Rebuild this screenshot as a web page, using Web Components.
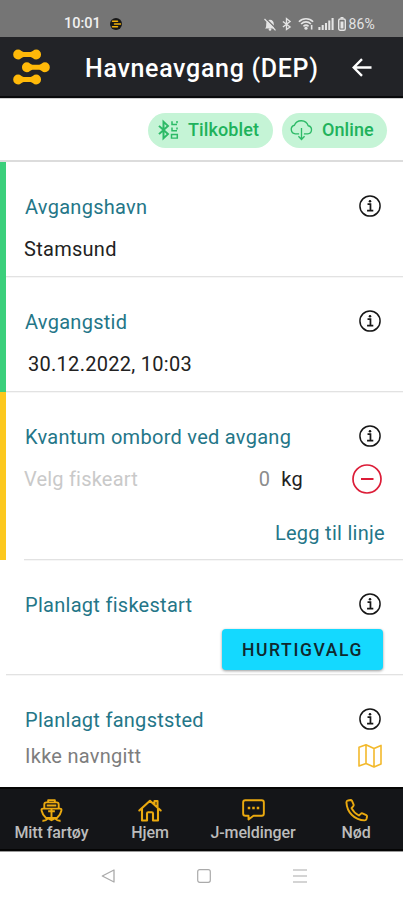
<!DOCTYPE html>
<html lang="no">
<head>
<meta charset="utf-8">
<title>Havneavgang (DEP)</title>
<style>
html,body{margin:0;background:#fff}
body{width:403px;height:900px;overflow:hidden;font-family:Roboto,"Liberation Sans",sans-serif}
</style>
</head>
<body>
<departure-app></departure-app>
<script>
const define=(name,html)=>{
  const t=document.createElement('template');t.innerHTML=html;
  customElements.define(name,class extends HTMLElement{
    constructor(){super();this.attachShadow({mode:'open'}).append(t.content.cloneNode(true));}
  });
};

const icons={
 info:['0 0 24 24','<circle cx="12" cy="12" r="11" stroke-width="1.6"/><path d="M9.3 10h3.2v6.7M8.8 17h6.8" stroke-width="1.9"/><circle cx="12" cy="6.8" r="1.4" fill="currentColor" stroke="none"/>'],
 minus:['0 0 30 30','<circle cx="15" cy="15" r="14" stroke-width="1.7"/><path d="M9 15h12.5" stroke-width="2"/>'],
 map:['0 0 24 24','<path d="M1 3.2 8 .8 16 4.5 23 1.4V20L16 23 8 19.5 1 22ZM8 .8V19.5M16 4.5V23" stroke-width="1.6" stroke-linejoin="round"/>'],
 back:['0 0 21 20','<path d="M20.500 10H2M10.5 1.2 1.8 10l8.7 8.8" stroke-width="2.5"/>'],
 logo:['0 0 38 36','<g fill="currentColor" stroke="none"><path d="M5.200.5C8 .5 9 2.800 11 3h7c2-.2 3-2.500 5.800-2.500a4.800 4.800 0 0 1 0 10C21 10.500 20 8.200 18 8h-7c-2 .2-3 2.500-5.800 2.500a5 5 0 0 1 0-10Z"/><path transform="translate(9 12.700)" d="M5.200.5C8 .5 9 2.800 11 3h7c2-.2 3-2.500 5.800-2.500a4.800 4.800 0 0 1 0 10C21 10.500 20 8.200 18 8h-7c-2 .2-3 2.500-5.800 2.500a5 5 0 0 1 0-10Z"/><path transform="translate(0 25)" d="M5.200.5C8 .5 9 2.800 11 3h7c2-.2 3-2.500 5.800-2.500a4.800 4.800 0 0 1 0 10C21 10.500 20 8.200 18 8h-7c-2 .2-3 2.500-5.800 2.500a5 5 0 0 1 0-10Z"/></g>'],
 app:['0 0 12 12','<circle cx="6" cy="6" r="6" fill="#171717" stroke="none"/><path d="M2.500 3.200h5M4.500 6h6M2.500 8.800h5" stroke="#f2b20c" stroke-width="1.500" stroke-linecap="round"/>'],
 bell:['0 0 12 13','<path d="M1 10.500c1.200-1 1.200-2 1.200-4.500 0-2.500 1.500-4.200 3.800-4.200S9.800 3.500 9.800 6c0 2.500 0 3.500 1.200 4.500Z" fill="currentColor" stroke="none"/><circle cx="6" cy="11.500" r="1.300" fill="currentColor" stroke="none"/><path d="M1.500.3 12.500 11" stroke="#757575" stroke-width="1.300"/><path d="M.5 1 11.500 12.300" stroke-width="1.200"/>'],
 bt:['0 0 10 14','<path d="M1 4l8 6.500L5 13.500V.7L9 4 1 10.500" stroke-width="1.500"/>'],
 wifi:['0 0 17 13','<path d="M1 4C5-.3 12-.3 16 4M3.300 6.500c3-3 7.400-3 10.400 0M5.800 9c1.700-1.500 3.800-1.500 5.400 0" stroke-width="1.800"/><circle cx="8.500" cy="11" r="1.700" fill="currentColor" stroke="none"/><path d="M14.500 7.500v5" stroke-width="1.700"/>'],
 signal:['0 0 17 12','<path d="M1.500 9v3M5 7v5M8.500 5v7M12 2.500V12M15.500 0v12" stroke-width="2.200"/>'],
 battery:['0 0 8 14','<rect x=".7" y="2" width="6.600" height="11.300" rx="1.500" stroke-width="1.400"/><path d="M2.500.8h3" stroke-width="1.600"/><path d="M4 4.500v7" stroke-width="3"/>'],
 ble:['0 0 22 22','<path d="M1 6.500l9 9L5.500 20V2L10 6.500l-9 9" stroke-width="2"/><path d="M14 1.500v3.500h5M19 1.200v2.300M14 8.300v3.500h5M19 8.300v2.200M13.500 16h5.800v4h-5.800Z" stroke-width="1.500"/>'],
 cloud:['0 0 24 22','<path d="M9.500 14.500H5.600a4.600 4.600 0 0 1-1-9A7.700 7.700 0 0 1 19 6a4.300 4.300 0 0 1-.5 8.500h-4M12 8.500V20M8.800 17l3.200 3.500 3.200-3.500" stroke-width="1.400"/>'],
 ship:['0 0 24 24','<path d="M8.500 3.500V1.200h7v2.300M4.500 10V5.700Q4.500 3.500 6.700 3.500h10.600q2.200 0 2.200 2.200V10M7 6.800h10M12 10v11.500M3.300 10h17.400c1.500 0 2 .8 1.600 2.200-.6 2.800-2.300 5.600-4.600 7.600H6.300C4 17.800 2.300 15 1.700 12.200 1.300 10.800 1.800 10 3.300 10ZM8.500 12.800h7M2.500 22.700c3 .5 4-.5 6-2.500l3.500 2 3.500-2c2 2 3 3 6 2.500" stroke-width="2" stroke-linejoin="round"/>'],
 home:['0 0 24 24','<path d="M1.300 12 12 1.800 22.700 12M4 9.800v12.700h5V15q0-1.200 1.200-1.200h3.600Q15 13.800 15 15v7.500h5V9.800M16.500 5V2h3v6" stroke-width="2.100" stroke-linecap="round" stroke-linejoin="round"/>'],
 chat:['0 0 24 22','<path d="M3.500 1.200h17q2.300 0 2.300 2.300v11q0 2.300-2.300 2.300H12L6.800 20.500v-3.700H3.500q-2.300 0-2.300-2.300v-11q0-2.300 2.300-2.300Z" stroke-width="2" stroke-linejoin="round"/><path d="M6 9h2.600M10.700 9h2.600M15.400 9H18" stroke-width="2.500"/>'],
 phone:['0 0 24 24','<path d="M3.200 1.500 5.800 1q1 0 1.400.8l1.800 4q.3 1-.5 1.800L6.800 9.500c1.800 3.500 4.200 5.900 7.700 7.700l1.900-1.700q.8-.8 1.800-.5l4 1.800q.9.500.8 1.500l-.6 2.500q-.4 1.500-1.900 1.500C10 22 2 14 1.500 3.500q0-1.600 1.700-2Z" stroke-width="2" stroke-linejoin="round"/>'],
 sysback:['0 0 14 16','<path d="M13 2v12L1.300 8Z" stroke-width="1.300" stroke-linejoin="round"/>'],
 syshome:['0 0 14 14','<rect x=".7" y=".7" width="12.600" height="12.600" rx="2" stroke-width="1.200"/>'],
 sysmenu:['0 0 14 14','<path d="M0 1h14M0 7h14M0 13h14" stroke-width="1.200"/>']
};
customElements.define('ui-icon',class extends HTMLElement{
  connectedCallback(){
    const [box,body]=icons[this.getAttribute('name')];
    const s=this.getAttribute('size').split(' ');
    if(!this.shadowRoot)this.attachShadow({mode:'open'});
    this.shadowRoot.innerHTML=`<style>:host{display:block;flex:none;width:${s[0]}px;height:${s[1]||s[0]}px}svg{display:block;width:100%;height:100%;overflow:visible}</style><svg viewBox="${box}" preserveAspectRatio="none" fill="none" stroke="currentColor">${body}</svg>`;
  }
});

define('status-bar',`<style>
:host{display:flex;box-sizing:border-box;height:37px;background:#757575;color:#e4e4e4;padding:12px 28px 0 64px;align-items:center;font-size:14px;line-height:18px}
b{font-weight:500;color:#f0f0f0;font-size:14.5px}.sp{flex:1}
</style><b>10:01</b><ui-icon name="app" size="12" style="margin-left:9px"></ui-icon><span class="sp"></span>
<ui-icon name="bell" size="12 13"></ui-icon><ui-icon name="bt" size="9 12" style="margin-left:6px"></ui-icon><ui-icon name="wifi" size="16 12" style="margin-left:7px"></ui-icon><ui-icon name="signal" size="16 12" style="margin-left:4px"></ui-icon><ui-icon name="battery" size="8 14" style="margin:0 2px 0 4px"></ui-icon><span style="letter-spacing:.2px">86%</span>`);

define('app-header',`<style>
:host{display:flex;box-sizing:border-box;height:61px;background:#222327;color:#fff;align-items:center;padding:0 31px 0 13px;border-bottom:2px solid #08090b}
h1{margin:0 0 0 35px;font-size:25px;line-height:30px;font-weight:500;flex:1;white-space:nowrap;letter-spacing:.68px;padding-top:5px}
</style><ui-icon name="logo" size="37 36" style="color:#ffb909;margin-top:1px"></ui-icon><h1><slot></slot></h1><ui-icon name="back" size="20 19" style="margin-top:3px"></ui-icon>`);

define('status-chip',`<style>
:host{display:flex;box-sizing:border-box;height:35px;border-radius:18px;background:#c5f4d6;color:#2dba67;align-items:center;font-size:18px;line-height:22px;font-weight:500;white-space:nowrap;letter-spacing:.1px}
span{color:#20b25b;padding-bottom:1px}
</style><slot name="icon"></slot><span><slot></slot></span>`);

define('chip-row',`<style>
:host{display:flex;box-sizing:border-box;height:64px;justify-content:flex-end;align-items:flex-start;gap:9px;padding:14px 16px 0 0;border-bottom:2px solid #dcdcdc;border-top:1px solid #cfcfcf}
</style><slot></slot>`);

define('form-field',`<style>
:host{display:flex;box-sizing:border-box;height:var(--h,115px);border-left:6px solid var(--mark,transparent);font-size:20px;line-height:24px;letter-spacing:.28px;color:#222}
.body{flex:1;margin-left:var(--inset,0px);padding:32.500px 22px 0 calc(19px - var(--inset,0px));border-bottom:1px solid #e2e2e2;box-shadow:0 1px 0 #f6f6f6}
.top{display:flex;justify-content:space-between;align-items:center;height:24px;color:#247688;white-space:nowrap}
.top span{padding-top:1px}
.val{display:flex;margin-top:var(--gap,19px)}
::slotted(*){flex:1}
</style><div class="body"><div class="top"><span><slot name="label"></slot></span><ui-icon name="info" size="22" style="color:#161616"></ui-icon></div><div class="val"><slot></slot></div></div>`);

define('catch-line',`<style>
:host{display:block}
.row{display:flex;align-items:center;height:24px;white-space:nowrap;color:#c9c9c9}
.row span:first-child{margin-left:-1px;letter-spacing:.2px}
.n{margin-left:auto;color:#8c8c8c}.u{margin:0 49px 0 11px;color:#222}
.add{margin:30px -4px 0 0;text-align:right;color:#247688}
</style><div class="row"><span>Velg fiskeart</span><span class="n">0</span><span class="u">kg</span><ui-icon name="minus" size="30" style="color:#dc1c37;margin-right:-1px"></ui-icon></div><div class="add">Legg til linje</div>`);

define('quick-button',`<style>
:host{display:flex;justify-content:flex-end;margin-right:-2px}
button{all:unset;box-sizing:border-box;width:161px;height:41px;border-radius:4px;background:#14d9ff;color:#10282e;text-align:center;font-size:17.500px;line-height:40px;font-weight:500;letter-spacing:1.600px;box-shadow:0 1px 3px #0006}
</style><button><slot></slot></button>`);

define('place-line',`<style>
:host{display:flex;align-items:center;justify-content:space-between;color:#7d7d7d;margin-right:-1px;height:24px}
</style><span><slot></slot></span><ui-icon name="map" size="24" style="color:#f3b92c"></ui-icon>`);

define('nav-item',`<style>
:host{display:flex;flex-direction:column;align-items:center;width:var(--w);color:#bcbcbc;font-size:16px;line-height:19px;font-weight:500;white-space:nowrap;letter-spacing:-.1px}
.ic{color:#eaa90f;height:26px;display:flex;align-items:center}
</style><div class="ic"><slot name="icon"></slot></div><span><slot></slot></span>`);

define('bottom-nav',`<style>
:host{display:flex;box-sizing:border-box;height:64px;background:#141518;border-top:2px solid #050505;border-bottom:2px solid #050505;padding-top:8px}
ui-icon{color:#eaa90f}
</style>
<nav-item style="--w:103px"><ui-icon slot="icon" name="ship" size="23"></ui-icon>Mitt fartøy</nav-item>
<nav-item style="--w:94px"><ui-icon slot="icon" name="home" size="24 23"></ui-icon>Hjem</nav-item>
<nav-item style="--w:112px"><ui-icon slot="icon" name="chat" size="23 22"></ui-icon>J-meldinger</nav-item>
<nav-item style="--w:94px"><ui-icon slot="icon" name="phone" size="23"></ui-icon>Nød</nav-item>`);

define('system-nav',`<style>
:host{display:flex;box-sizing:border-box;height:49px;background:#fff;color:#aaa;align-items:center;padding-left:101px;gap:82px;border-top:1px solid #999}
</style><ui-icon name="sysback" size="14 16"></ui-icon><ui-icon name="syshome" size="14"></ui-icon><ui-icon name="sysmenu" size="14"></ui-icon>`);

define('departure-app',`<style>
:host{display:flex;flex-direction:column;height:900px;background:#fff}
main{height:626px;overflow:hidden}
</style>
<status-bar></status-bar>
<app-header>Havneavgang (DEP)</app-header>
<chip-row>
<status-chip style="width:125px"><ui-icon slot="icon" name="ble" size="22 20" style="margin:0 8px 0 10px"></ui-icon>Tilkoblet</status-chip>
<status-chip style="width:105px"><ui-icon slot="icon" name="cloud" size="23 21" style="margin:0 9px 0 8px"></ui-icon>Online</status-chip>
</chip-row>
<main>
<form-field style="--mark:#3bcf7b"><span slot="label">Avgangshavn</span><span style="margin-left:-1px">Stamsund</span></form-field>
<form-field style="--mark:#3bcf7b"><span slot="label">Avgangstid</span><span style="margin-left:3px">30.12.2022, 10:03</span></form-field>
<form-field style="--mark:#fcc81e;--h:168px;--inset:18px"><span slot="label">Kvantum ombord ved avgang</span><catch-line></catch-line></form-field>
<form-field style="--gap:13px"><span slot="label">Planlagt fiskestart</span><quick-button>HURTIGVALG</quick-button></form-field>
<form-field style="--gap:13px"><span slot="label">Planlagt fangststed</span><place-line>Ikke navngitt</place-line></form-field>
</main>
<bottom-nav></bottom-nav>
<system-nav></system-nav>`);
</script>
</body>
</html>
